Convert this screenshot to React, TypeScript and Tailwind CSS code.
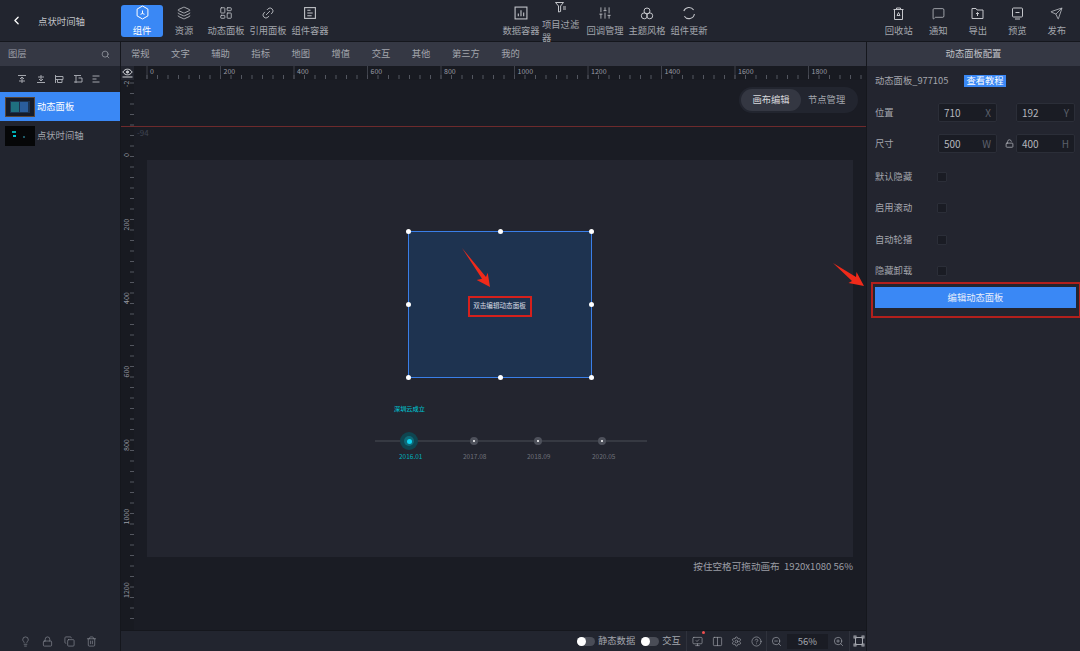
import {
  ChevronLeft,
  Layers,
  LayoutDashboard,
  Link2,
  Search,
  SlidersVertical,
  Send,
  MessageSquare,
  LockOpen,
  Settings,
  CircleHelp,
  ZoomIn,
  ZoomOut,
  Lightbulb,
  Lock,
  Copy,
  Trash2,
  Columns2,
  MonitorCheck,
} from "lucide-react";

const stroke = { strokeWidth: 1.4 };

const HexIcon = () => (
  <svg width="15" height="15" viewBox="0 0 14 15" fill="none" stroke="currentColor" strokeWidth="1">
    <path d="M7 1l5.4 3.1v6.8L7 14l-5.4-3.1V4.1z" />
    <path d="M7 5.500v3l-2 .8M7 8.500l2 .8" />
  </svg>
);

const DocBoxIcon = () => (
  <svg width="14" height="14" viewBox="0 0 13 13" fill="none" stroke="currentColor" strokeWidth="1">
    <rect x="1.5" y="1.5" width="10" height="10" />
    <path d="M4 4h3M4 6.5h5M4 9h4" />
  </svg>
);

const ChartBoxIcon = () => (
  <svg width="14" height="14" viewBox="0 0 13 13" fill="none" stroke="currentColor" strokeWidth="1">
    <rect x="1" y="1" width="11" height="11" />
    <path d="M4 9.5V7M6.5 9.5V4M9 9.5V6" />
  </svg>
);

const FilterIcon = () => (
  <svg width="13" height="11" viewBox="0 0 13 11" fill="none" stroke="currentColor" strokeWidth="1">
    <path d="M0.5 0.5h8L5.6 4v5.5L3.5 10V4z" />
    <path d="M8 5h3M8 7h3" />
  </svg>
);

const CirclesIcon = () => (
  <svg width="14" height="13" viewBox="0 0 14 13" fill="none" stroke="currentColor" strokeWidth="1">
    <circle cx="7" cy="4" r="3" />
    <circle cx="4.3" cy="8.8" r="3" />
    <circle cx="9.7" cy="8.8" r="3" />
  </svg>
);

const RefreshIcon = () => (
  <svg width="14" height="14" viewBox="0 0 14 14" fill="none" stroke="currentColor" strokeWidth="1.1">
    <path d="M1.8 5A5.5 5.5 0 0 1 11.6 4" />
    <path d="M12.4 8A5.5 5.5 0 0 1 2.4 10.2" />
  </svg>
);

const BinIcon = () => (
  <svg width="13" height="13" viewBox="0 0 13 13" fill="none" stroke="currentColor" strokeWidth="1">
    <path d="M1.5 2.5h10M4.5 2.5V1h4v1.5M2.5 2.5v10h8v-10" />
    <path d="M6.5 5.5l1.5 3H5z" />
  </svg>
);

const FolderUpIcon = () => (
  <svg width="13" height="13" viewBox="0 0 13 13" fill="none" stroke="currentColor" strokeWidth="1">
    <path d="M1 1.5h4l1 1.5h6v8.5H1z" />
    <path d="M6.5 9V5.5M5 7l1.5-1.5L8 7" />
  </svg>
);

const PreviewIcon = () => (
  <svg width="13" height="13" viewBox="0 0 13 13" fill="none" stroke="currentColor" strokeWidth="1">
    <rect x="1.5" y="1" width="10" height="9" rx="1" />
    <path d="M4.5 5.5h4M4 12h5" />
  </svg>
);

const FrameIcon = () => (
  <svg width="12" height="12" viewBox="0 0 12 12" fill="none" stroke="currentColor" strokeWidth="1">
    <path d="M2.5 2.5h7v7h-7z" />
    <rect x="1" y="1" width="2" height="2" />
    <rect x="9" y="1" width="2" height="2" />
    <rect x="1" y="9" width="2" height="2" />
    <rect x="9" y="9" width="2" height="2" />
  </svg>
);

const EyeFlatIcon = () => (
  <svg width="11" height="10" viewBox="0 0 11 10" fill="none" stroke="currentColor" strokeWidth="1">
    <path d="M0.8 4c1.4-2 3-2.8 4.7-2.8S8.8 2 10.2 4C8.8 6 7.2 6.8 5.5 6.8S2.2 6 0.8 4z" />
    <circle cx="5.5" cy="4" r="1.1" fill="currentColor" />
    <path d="M0.5 9h10" />
  </svg>
);

const AlignIcon = ({ d }: { d: string }) => (
  <svg width="10" height="10" viewBox="0 0 10 10" fill="none" stroke="currentColor" strokeWidth="1">
    <path d={d} />
  </svg>
);

const ToolItem = ({ icon, label, active }: { icon: React.ReactNode; label: string; active?: boolean }) => (
  <div
    className={`flex h-[32px] w-[42px] flex-col items-center rounded-[3px] ${
      active ? "bg-[#3a88f5] text-white" : "text-[#a3a6ad]"
    }`}
  >
    <div className={`flex h-[15px] items-end justify-center ${active ? "text-white" : "text-[#c4c6cb]"}`}>{icon}</div>
    <span className="mt-[4px] whitespace-nowrap text-[9.3px] leading-[12px]">{label}</span>
  </div>
);

const RightItem = ({ icon, label }: { icon: React.ReactNode; label: string }) => (
  <div className="flex h-[32px] w-[39.5px] flex-col items-center text-[#a3a6ad]">
    <div className="flex h-[15px] items-end justify-center text-[#c4c6cb]">{icon}</div>
    <span className="mt-[4px] whitespace-nowrap text-[9.3px] leading-[12px]">{label}</span>
  </div>
);

const NumField = ({ value, unit, className }: { value: string; unit: string; className: string }) => (
  <div
    className={`flex h-[19px] items-center justify-between rounded-[2px] border border-[#2b2e38] bg-[#1a1c24] px-[5px] text-[10px] ${className}`}
  >
    <span className="text-[#b4b6bc]">{value}</span>
    <span className="text-[#5c606b]">{unit}</span>
  </div>
);

const CheckRow = ({ label }: { label: string }) => (
  <div className="flex h-[31.5px] items-center">
    <span className="w-[62px] text-[9.3px] text-[#a3a6ad]">{label}</span>
    <div className="h-[10px] w-[10px] rounded-[1px] border border-[#2b2e38] bg-[#1a1c24]" />
  </div>
);

const Handle = ({ className }: { className: string }) => (
  <div className={`absolute h-[5px] w-[5px] rounded-full bg-white ${className}`} />
);

const TimelineDot = ({ left }: { left: string }) => (
  <div className={`absolute top-[277px] flex h-[8px] w-[8px] items-center justify-center rounded-full bg-[#4e515b] ${left}`}>
    <div className="h-[2px] w-[2px] rounded-full bg-white" />
  </div>
);

const hMajor = [0, 200, 400, 600, 800, 1000, 1200, 1400, 1600, 1800];
const vMajor = [0, 200, 400, 600, 800, 1000, 1200];

const HorizontalRuler = () => (
  <svg width="732" height="14" className="block">
    {Array.from({ length: 70 }).map((_, i) => (
      <line key={i} x1={13 + i * 10.5} x2={13 + i * 10.5} y1="9" y2="13" stroke="#5a5d67" strokeWidth="0.9" />
    ))}
    {hMajor.map((n, i) => (
      <g key={n}>
        <line x1={13 + i * 73.5} x2={13 + i * 73.5} y1="0" y2="13" stroke="#4a4d57" strokeWidth="0.8" />
        <text x={16 + i * 73.5} y="8" fontSize="7" fill="#9a9da5">
          {n}
        </text>
      </g>
    ))}
  </svg>
);

const VerticalRuler = () => (
  <svg width="13" height="551" className="block">
    {Array.from({ length: 52 }).map((_, i) => (
      <line key={i} x1="9" x2="13" y1={3 + i * 10.5} y2={3 + i * 10.5} stroke="#5a5d67" strokeWidth="0.9" />
    ))}
    <text transform="translate(8,7) rotate(-90)" fontSize="7" fill="#9a9da5">
      -2
    </text>
    {vMajor.map((n, i) => (
      <text key={n} transform={`translate(8,${77 + i * 73.5}) rotate(-90)`} fontSize="7" fill="#9a9da5">
        {n}
      </text>
    ))}
  </svg>
);

const App = () => {
  return (
    <div className="flex h-[651px] w-[1080px] flex-col overflow-hidden bg-[#1a1c24] font-['Noto_Sans_CJK_SC','Noto_Sans',sans-serif] text-[#a3a6ad]">
      {/* top bar */}
      <header className="flex h-[42px] shrink-0 items-center border-b border-[#15171d] bg-[#22252f] pt-[1px]">
        <div className="flex w-[121px] items-center pl-[10px]">
          <ChevronLeft size={13} strokeWidth={2.4} className="text-white" />
          <span className="ml-[15px] text-[9.4px] text-[#c0c2c7]">点状时间轴</span>
        </div>
        <div className="flex w-[379px]">
          <ToolItem active icon={<HexIcon />} label="组件" />
          <ToolItem icon={<Layers size={14} {...stroke} />} label="资源" />
          <ToolItem icon={<LayoutDashboard size={14} {...stroke} />} label="动态面板" />
          <ToolItem icon={<Link2 size={14} {...stroke} className="-rotate-45" />} label="引用面板" />
          <ToolItem icon={<DocBoxIcon />} label="组件容器" />
        </div>
        <div className="flex w-[379px]">
          <ToolItem icon={<ChartBoxIcon />} label="数据容器" />
          <div className="-my-[5px] flex h-[42px] w-[42px] flex-col text-[#a3a6ad]">
            <div className="mt-[2px] flex h-[11px] justify-center pr-[4px] text-[#c4c6cb]">
              <FilterIcon />
            </div>
            <span className="mt-[5px] w-[38px] text-[9.3px] leading-[13px]">项目过滤器</span>
          </div>
          <ToolItem icon={<SlidersVertical size={14} {...stroke} />} label="回调管理" />
          <ToolItem icon={<CirclesIcon />} label="主题风格" />
          <ToolItem icon={<RefreshIcon />} label="组件更新" />
        </div>
        <div className="flex">
          <RightItem icon={<BinIcon />} label="回收站" />
          <RightItem icon={<MessageSquare size={13} {...stroke} />} label="通知" />
          <RightItem icon={<FolderUpIcon />} label="导出" />
          <RightItem icon={<PreviewIcon />} label="预览" />
          <RightItem icon={<Send size={13} {...stroke} />} label="发布" />
        </div>
      </header>

      <div className="flex min-h-0 flex-1">
        {/* layers */}
        <aside className="flex w-[121px] shrink-0 flex-col border-r border-[#15171d] bg-[#22252f]">
          <div className="flex h-[24px] items-center justify-between bg-[#353844] pl-[8px] pr-[10px] text-[9.3px] text-[#9a9da5]">
            <span>图层</span>
            <Search size={9} />
          </div>
          <div className="flex h-[26px] items-center gap-[8.5px] pl-[17px] text-[#a3a6ad]">
            <AlignIcon d="M1 1.5h8M5 9V3M3 5l2-2 2 2M2 7h6" />
            <AlignIcon d="M1 8.5h8M5 1v6M3 5l2 2 2-2M2 3h6" />
            <AlignIcon d="M1.5 1v8M1.5 2.5H9v3H1.5M3.5 5.5v3H8v-3" />
            <AlignIcon d="M1 1.5h7M3 1v8M5.5 4H9v4H1" />
            <AlignIcon d="M1.5 2h7M1.5 5h4M1.5 8h7" />
          </div>
          <div className="flex h-[29px] items-center bg-[#3a88f5] pl-[5px] text-[9.3px] text-white">
            <div className="flex h-[20px] w-[30px] items-center justify-center border border-[#5a4638] bg-[#161b28]">
              <div className="flex h-[12px] w-[20px] gap-[1px] bg-[#1c3350] p-[1px]">
                <div className="h-full w-[8px] bg-[#1f6f80]" />
                <div className="h-full w-[8px] bg-[#2a5d9c]" />
              </div>
            </div>
            <span className="ml-[2px]">动态面板</span>
          </div>
          <div className="flex h-[29px] items-center pl-[5px] text-[9.3px] text-[#a3a6ad]">
            <div className="relative h-[20px] w-[30px] bg-[#060708]">
              <div className="absolute left-[7px] top-[5px] h-[2px] w-[4px] bg-[#00a8a8]" />
              <div className="absolute left-[8px] top-[9px] h-[2px] w-[3px] bg-[#00c2d1]" />
              <div className="absolute left-[18px] top-[10px] h-[2px] w-[2px] bg-[#1f5a66]" />
            </div>
            <span className="ml-[2px]">点状时间轴</span>
          </div>
          <div className="mt-auto flex h-[15px] items-start gap-[11px] pl-[20px] text-[#8d9099]">
            <Lightbulb size={11} {...stroke} />
            <Lock size={11} {...stroke} />
            <Copy size={11} {...stroke} />
            <Trash2 size={11} {...stroke} />
          </div>
        </aside>

        {/* centre */}
        <main className="flex w-[745px] shrink-0 flex-col">
          <nav className="flex h-[24px] shrink-0 items-center gap-[21.5px] bg-[#353844] pl-[10px] text-[9.3px] text-[#a3a6ad]">
            {["常规", "文字", "辅助", "指标", "地图", "增值", "交互", "其他", "第三方", "我的"].map((t) => (
              <span key={t} className="whitespace-nowrap">
                {t}
              </span>
            ))}
          </nav>

          <div className="relative min-h-0 flex-1 overflow-hidden">
            {/* rulers */}
            <div className="absolute left-[13px] top-0 bg-[#181a21]">
              <HorizontalRuler />
            </div>
            <div className="absolute left-0 top-[14px] bg-[#181a21]">
              <VerticalRuler />
            </div>
            <div className="absolute left-0 top-0 flex h-[14px] w-[13px] items-center justify-center bg-[#22252f] text-[#d0d2d6]">
              <EyeFlatIcon />
            </div>

            {/* tabs */}
            <div className="absolute right-[8px] top-[21px] flex h-[26px] w-[119px] items-center rounded-full bg-[#22252f] pl-[2px] text-[9.3px]">
              <div className="flex h-[22px] w-[60px] items-center justify-center rounded-full bg-[#343742] text-[#d8d9dc]">画布编辑</div>
              <span className="ml-[7px] text-[#a3a6ad]">节点管理</span>
            </div>

            {/* guide */}
            <div className="absolute left-0 right-0 top-[60px] h-[1px] bg-[#6e2a2c]" />
            <span className="absolute left-[16px] top-[61px] text-[8px] text-[#3f4452]">-94</span>

            {/* canvas */}
            <div className="absolute left-[26px] top-[94px] h-[397px] w-[706px] bg-[#23252f]">
              <div className="absolute left-[261px] top-[71px] h-[147px] w-[184px] border-[1.5px] border-[#3a7fe8] bg-[#1e3350]">
                <Handle className="-left-[3px] -top-[3px]" />
                <Handle className="left-[89px] -top-[3px]" />
                <Handle className="-right-[3px] -top-[3px]" />
                <Handle className="-left-[3px] top-[70px]" />
                <Handle className="-right-[3px] top-[70px]" />
                <Handle className="-bottom-[3px] -left-[3px]" />
                <Handle className="-bottom-[3px] left-[89px]" />
                <Handle className="-bottom-[3px] -right-[3px]" />
                <div className="absolute left-[58.5px] top-[63.5px] flex h-[21px] w-[64px] items-center justify-center border-2 border-[#d6201c] text-[6.6px] text-[#d8dde4]">
                  双击编辑动态面板
                </div>
              </div>

              <span className="absolute left-[247px] top-[244px] text-[6.2px] font-medium text-[#00bcc8]">深圳云成立</span>
              <div className="absolute left-[228px] top-[280px] h-[1.5px] w-[272px] bg-[#363942]" />
              <div className="absolute left-[253px] top-[272px] flex h-[18px] w-[18px] items-center justify-center rounded-full bg-[#0e4550]">
                <div className="flex h-[10px] w-[10px] items-center justify-center rounded-full bg-[#0f6a78]">
                  <div className="h-[5px] w-[5px] rounded-full bg-[#0fd3f0]" />
                </div>
              </div>
              <TimelineDot left="left-[323px]" />
              <TimelineDot left="left-[387px]" />
              <TimelineDot left="left-[451px]" />
              <span className="absolute left-[252px] top-[292px] text-[6.5px] text-[#00aebb]">2016.01</span>
              <span className="absolute left-[316px] top-[292px] text-[6.5px] text-[#6f727b]">2017.08</span>
              <span className="absolute left-[380px] top-[292px] text-[6.5px] text-[#6f727b]">2018.09</span>
              <span className="absolute left-[445px] top-[292px] text-[6.5px] text-[#6f727b]">2020.05</span>
            </div>

            {/* annotation arrows */}
            <svg className="absolute left-0 top-0" width="745" height="320" viewBox="121 66 745 320">
              <polygon points="462,248 486,277 487.7,272.7 490,287 476.7,280 482,278.7" fill="#f02a1a" />
              <polygon points="833,263 856,277 856.5,272 864,286 848.5,283 852,281" fill="#f02a1a" />
            </svg>

            <div className="absolute right-[13px] top-[493px] text-[9.6px] text-[#9a9da5]">
              按住空格可拖动画布 &nbsp;1920x1080 56%
            </div>
          </div>

          {/* status bar */}
          <footer className="flex h-[21px] shrink-0 items-center border-t border-[#15171d] bg-[#22252f] pl-[456px] text-[9.3px] text-[#a3a6ad]">
            <div className="flex h-[9px] w-[18px] items-center rounded-full bg-[#4a4d57]">
              <div className="h-[9px] w-[9px] rounded-full bg-white" />
            </div>
            <span className="ml-[3px]">静态数据</span>
            <div className="ml-[6px] flex h-[9px] w-[18px] items-center rounded-full bg-[#4a4d57]">
              <div className="h-[9px] w-[9px] rounded-full bg-white" />
            </div>
            <span className="ml-[3px]">交互</span>
            <div className="ml-[5px] h-full w-px bg-[#2f323c]" />
            <div className="relative ml-[5px] text-[#a3a6ad]">
              <MonitorCheck size={11} {...stroke} />
              <div className="absolute -right-[2px] -top-[5px] h-[3px] w-[3px] rounded-full bg-[#f05050]" />
            </div>
            <Columns2 size={11} {...stroke} className="ml-[9px]" />
            <Settings size={11} {...stroke} className="ml-[8px]" />
            <CircleHelp size={11} {...stroke} className="ml-[9px]" />
            <div className="ml-[4px] h-full w-px bg-[#2f323c]" />
            <ZoomOut size={11} {...stroke} className="ml-[4px]" />
            <div className="ml-[5px] flex h-[15px] w-[41px] items-center justify-center bg-[#1a1c24] text-[9.5px]">56%</div>
            <ZoomIn size={11} {...stroke} className="ml-[5px]" />
            <div className="ml-[5px] h-full w-px bg-[#2f323c]" />
            <div className="ml-[3px]">
              <FrameIcon />
            </div>
          </footer>
        </main>

        {/* config */}
        <aside className="relative flex flex-1 flex-col border-l border-[#15171d] bg-[#23252f]">
          <div className="flex h-[24px] shrink-0 items-center justify-center bg-[#353844] text-[9.3px] text-[#c0c2c7]">动态面板配置</div>
          <div className="flex flex-col pl-[8px]">
            <div className="mt-[9px] flex h-[12px] items-center text-[9.3px]">
              <span className="w-[89px] whitespace-nowrap">动态面板_977105</span>
              <span className="flex h-[12px] w-[42px] items-center justify-center bg-[#3a88f5] text-white">查看教程</span>
            </div>
            <div className="mt-[16px] flex h-[19px] items-center text-[9.3px]">
              <span className="w-[63px]">位置</span>
              <NumField value="710" unit="X" className="w-[59px]" />
              <NumField value="192" unit="Y" className="ml-[19px] w-[59px]" />
            </div>
            <div className="mt-[12px] flex h-[19px] items-center text-[9.3px]">
              <span className="w-[63px]">尺寸</span>
              <NumField value="500" unit="W" className="w-[59px]" />
              <div className="flex w-[19px] justify-center pl-[6px] text-[#b4b6bc]">
                <LockOpen size={9} />
              </div>
              <NumField value="400" unit="H" className="w-[59px]" />
            </div>
            <div className="mt-[8px] flex flex-col">
              <CheckRow label="默认隐藏" />
              <CheckRow label="启用滚动" />
              <CheckRow label="自动轮播" />
              <CheckRow label="隐藏卸载" />
            </div>
            <div className="flex h-[21px] w-[201px] items-center justify-center bg-[#3a88f5] text-[9.3px] text-[#e8eefb]">
              编辑动态面板
            </div>
          </div>
          <div className="absolute left-[4px] top-[240px] h-[36px] w-[210px] border-2 border-[#b3201c]" />
        </aside>
      </div>
    </div>
  );
};

export default App;
